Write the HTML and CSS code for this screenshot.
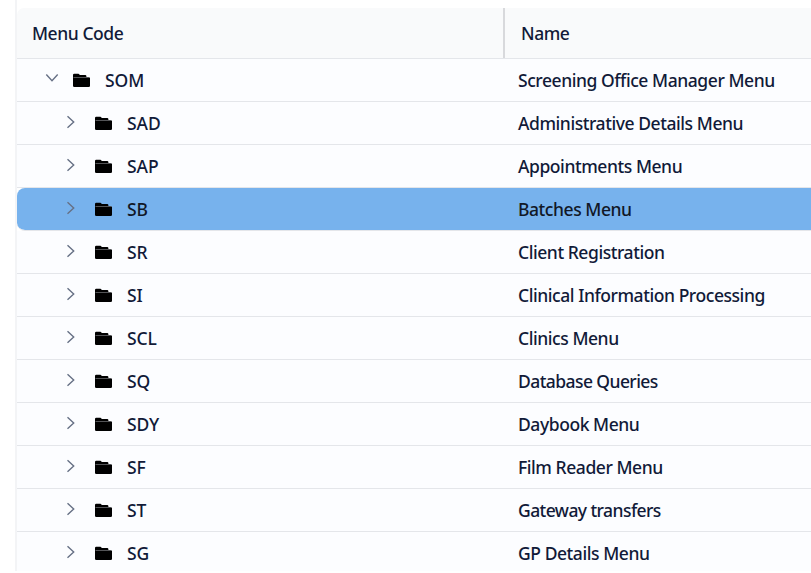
FILE: index.html
```html
<!DOCTYPE html>
<html lang="en">
<head>
<meta charset="utf-8">
<title>Menu Codes</title>
<link rel="stylesheet" href="styles.css">
</head>
<body>
<svg class="defs" aria-hidden="true">
  <symbol id="folder" viewBox="0 0 18 15"><path d="M0 5V2A1.2 1.2 0 0 1 1.2.8H5.5L7 2.1h5.2A1.2 1.2 0 0 1 13.4 3.3V4H16.2v1z"/><path d="M0 4.8h17v8a1.3 1.3 0 0 1-1.3 1.3H1.3A1.3 1.3 0 0 1 0 12.8z"/><path class="crease" d="M.5 4.5h16"/></symbol>
  <symbol id="right" viewBox="0 0 14 14"><path d="M3.5 1.3 9.7 7 3.5 12.7"/></symbol>
  <symbol id="down" viewBox="0 0 14 14"><path d="M1.3 3.5 7 9.7 12.7 3.5"/></symbol>
</svg>
<div class="tree" role="treegrid">
  <div class="head"><div class="head-code">Menu Code</div><div class="head-name">Name</div></div>
  <div class="row root"><div class="code"><svg class="chevron"><use href="#down"/></svg><svg class="folder"><use href="#folder"/></svg><span>SOM</span></div><div class="name">Screening Office Manager Menu</div></div>
  <div class="row"><div class="code"><svg class="chevron"><use href="#right"/></svg><svg class="folder"><use href="#folder"/></svg><span>SAD</span></div><div class="name">Administrative Details Menu</div></div>
  <div class="row"><div class="code"><svg class="chevron"><use href="#right"/></svg><svg class="folder"><use href="#folder"/></svg><span>SAP</span></div><div class="name">Appointments Menu</div></div>
  <div class="row selected"><div class="code"><svg class="chevron"><use href="#right"/></svg><svg class="folder"><use href="#folder"/></svg><span>SB</span></div><div class="name">Batches Menu</div></div>
  <div class="row"><div class="code"><svg class="chevron"><use href="#right"/></svg><svg class="folder"><use href="#folder"/></svg><span>SR</span></div><div class="name">Client Registration</div></div>
  <div class="row"><div class="code"><svg class="chevron"><use href="#right"/></svg><svg class="folder"><use href="#folder"/></svg><span>SI</span></div><div class="name">Clinical Information Processing</div></div>
  <div class="row"><div class="code"><svg class="chevron"><use href="#right"/></svg><svg class="folder"><use href="#folder"/></svg><span>SCL</span></div><div class="name">Clinics Menu</div></div>
  <div class="row"><div class="code"><svg class="chevron"><use href="#right"/></svg><svg class="folder"><use href="#folder"/></svg><span>SQ</span></div><div class="name tight">Database Queries</div></div>
  <div class="row"><div class="code"><svg class="chevron"><use href="#right"/></svg><svg class="folder"><use href="#folder"/></svg><span>SDY</span></div><div class="name">Daybook Menu</div></div>
  <div class="row"><div class="code"><svg class="chevron"><use href="#right"/></svg><svg class="folder"><use href="#folder"/></svg><span>SF</span></div><div class="name">Film Reader Menu</div></div>
  <div class="row"><div class="code"><svg class="chevron"><use href="#right"/></svg><svg class="folder"><use href="#folder"/></svg><span>ST</span></div><div class="name tight">Gateway transfers</div></div>
  <div class="row"><div class="code"><svg class="chevron"><use href="#right"/></svg><svg class="folder"><use href="#folder"/></svg><span>SG</span></div><div class="name">GP Details Menu</div></div>
</div>
</body>
</html>
```
FILE: styles.css
```css
* { box-sizing: border-box; }
body {
  margin: 0;
  height: 573px;
  overflow: hidden;
  background: #fff;
  color: #111a38;
  font: 500 17.5px/24px "Segoe UI", "Noto Sans", sans-serif;
  letter-spacing: -0.44px;
  white-space: nowrap;
}
.defs { position: absolute; width: 0; height: 0; }
.tree {
  margin-left: 15px;
  padding-top: 8px;
  height: 571px;
  overflow: hidden;
  border-left: 2px solid #f3f4f6;
}
.head {
  display: flex;
  align-items: center;
  height: 51px;
  background: #f9fafb;
  border-bottom: 1px solid #e4e6ea;
  border-top-left-radius: 7px;
}
.head-code { width: 488px; padding-left: 15px; height: 50px; line-height: 51px; border-right: 2px solid #d8d9dc; }
.head-name { padding-left: 16px; line-height: 51px; }
.row {
  display: flex;
  align-items: center;
  height: 43px;
  background: #fcfdff;
  border-bottom: 1px solid #e4e6ea;
}
.code { display: flex; align-items: center; width: 501px; padding-left: 47px; }
.root .code { padding-left: 28px; }
.chevron { width: 14px; height: 14px; margin-top: -3px; fill: none; stroke: #667085; stroke-width: 1.4; }
.root .chevron { margin-top: -5px; }
.folder { width: 18px; height: 15px; margin-left: 17px; fill: #000; }
.root .folder { margin-left: 14px; }
.code span { margin-left: 14px; letter-spacing: -0.1px; }
.tight { letter-spacing: -0.57px; }
.crease { fill: none; stroke: #77797d; stroke-width: .7; }
.selected { background: linear-gradient(#77b2ed, #77b2ed) padding-box; color: #111827; border-radius: 8px 0 0 8px; }
```
